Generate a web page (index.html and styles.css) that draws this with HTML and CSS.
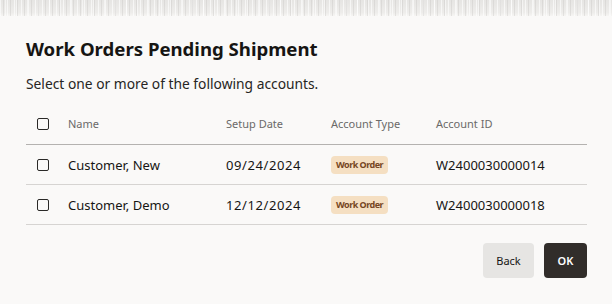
FILE: index.html
```html
<html>

<head>
    <title>Work Orders Pending Shipment</title>
    <link rel="stylesheet" href="styles.css">
</head>

<body>
    <div class="backdrop"></div>
    <div class="dialog">
        <h1>Work Orders Pending Shipment</h1>
        <p class="intro">Select one or more of the following accounts.</p>

        <div class="grid">
            <div class="row head">
                <div class="cell check"><span class="box"></span></div>
                <div class="cell">Name</div>
                <div class="cell">Setup Date</div>
                <div class="cell">Account Type</div>
                <div class="cell">Account ID</div>
            </div>
            <div class="row">
                <div class="cell check"><span class="box"></span></div>
                <div class="cell">Customer, New</div>
                <div class="cell date">09/24/2024</div>
                <div class="cell"><span class="badge">Work Order</span></div>
                <div class="cell">W2400030000014</div>
            </div>
            <div class="row">
                <div class="cell check"><span class="box"></span></div>
                <div class="cell">Customer, Demo</div>
                <div class="cell date">12/12/2024</div>
                <div class="cell"><span class="badge">Work Order</span></div>
                <div class="cell">W2400030000018</div>
            </div>
        </div>

        <div class="actions">
            <button class="back">Back</button>
            <button class="ok">OK</button>
        </div>
    </div>
</body>

</html>
```

FILE: styles.css
```css
body {
    margin: 0;
    background-color: #faf9f8;
    font-family: "Noto Sans", sans-serif;
    color: #161513;
}

.backdrop {
    height: 16px;
    background-color: #e9e8e6;
    background-image:
        repeating-linear-gradient(90deg, rgba(255, 255, 255, 0.6) 0 1px, transparent 1px 3px, rgba(200, 198, 196, 0.4) 3px 4px, transparent 4px 7px),
        repeating-linear-gradient(90deg, transparent 0 5px, rgba(255, 255, 255, 0.5) 5px 6px, transparent 6px 11px),
        linear-gradient(#e6e5e3, #eeedeb 80%, #f6f5f3);
}

.dialog {
    padding: 0 25px 0 26px;
}

h1 {
    margin: 20px 0 0 0;
    font-size: 18.6px;
    line-height: 26px;
    font-weight: 700;
}

.intro {
    margin: 12px 0 0 0;
    font-size: 13.8px;
    line-height: 20px;
    color: #262523;
}

.grid {
    margin-top: 13px;
}

.row {
    display: grid;
    grid-template-columns: 42px 158px 105px 105px 1fr;
    align-items: center;
    height: 39px;
    border-bottom: 1px solid #d6d4d2;
    font-size: 13px;
}

.row.head {
    height: 33px;
    padding-bottom: 4px;
    border-bottom-color: #b4b2b0;
    font-size: 11px;
    color: #6b6a68;
}

.check {
    padding-left: 11px;
}

.box {
    display: block;
    width: 10px;
    height: 10px;
    border: 1.5px solid #2a2927;
    border-radius: 2px;
}

.date {
    letter-spacing: 0.6px;
}

.badge {
    display: inline-block;
    padding: 0 5px;
    height: 18px;
    line-height: 18px;
    border-radius: 4px;
    background-color: #f5dfc2;
    color: #76461f;
    font-size: 9px;
    font-weight: 700;
    letter-spacing: -0.5px;
}

.actions {
    display: flex;
    justify-content: flex-end;
    gap: 10px;
    margin-top: 18px;
}

button {
    font-family: "Noto Sans", sans-serif;
    font-size: 11px;
    height: 35px;
    border: none;
    border-radius: 4px;
    cursor: pointer;
}

.back {
    width: 51px;
    background-color: #e6e5e3;
    color: #161513;
}

.ok {
    width: 43px;
    background-color: #312d2a;
    color: #ffffff;
    font-weight: 600;
}
```
